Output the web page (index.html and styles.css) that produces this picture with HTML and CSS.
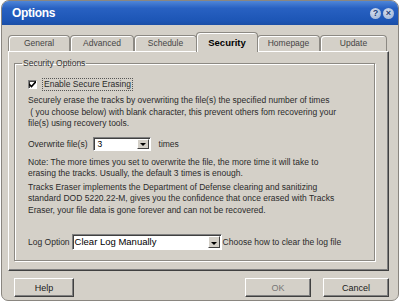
FILE: index.html
```html
<!DOCTYPE html>
<html lang="en">
<head>
    <meta charset="UTF-8">
    <title>Options</title>
    <link rel="stylesheet" href="styles.css">
</head>
<body>
    <div class="window">
        <div class="titlebar">
            <span class="title">Options</span>
            <div class="caption-btns">
                <span class="cap-btn">?</span>
                <span class="cap-btn">&#215;</span>
            </div>
        </div>

        <div class="client">
            <div class="tabs">
                <div class="tab">General</div>
                <div class="tab">Advanced</div>
                <div class="tab">Schedule</div>
                <div class="tab active">Security</div>
                <div class="tab">Homepage</div>
                <div class="tab">Update</div>
            </div>

            <div class="panel">
                <fieldset class="group">
                    <legend>Security Options</legend>

                    <label class="check">
                        <span class="check-box">
                            <svg width="7" height="7" viewBox="0 0 7 7"><path d="M0 3 L2.5 5.5 L7 0.5" fill="none" stroke="#000" stroke-width="1.6"/></svg>
                        </span>
                        <span class="focus">Enable Secure Erasing</span>
                    </label>

                    <p class="text">
                        Securely erase the tracks by overwriting the file(s) the specified number of times<br>
                        &nbsp;( you choose below) with blank character, this prevent others fom recovering your<br>
                        file(s) using recovery tools.
                    </p>

                    <div class="row">
                        <span>Overwrite file(s)</span>
                        <div class="combo combo-times">
                            <span class="combo-value">3</span>
                            <span class="combo-drop"><span class="arrow"></span></span>
                        </div>
                        <span class="after">times</span>
                    </div>

                    <p class="text note">
                        Note: The more times you set to overwrite the file, the more time it will take to<br>
                        erasing the tracks. Usually, the default 3 times is enough.
                    </p>

                    <p class="text dod">
                        Tracks Eraser implements the Department of Defense clearing and sanitizing<br>
                        standard DOD 5220.22-M, gives you the confidence that once erased with Tracks<br>
                        Eraser, your file data is gone forever and can not be recovered.
                    </p>

                    <div class="row log-row">
                        <span>Log Option</span>
                        <div class="combo combo-log">
                            <span class="combo-value">Clear Log Manually</span>
                            <span class="combo-drop"><span class="arrow"></span></span>
                        </div>
                        <span>Choose how to clear the log file</span>
                    </div>
                </fieldset>
            </div>

            <div class="buttons">
                <button class="btn btn-help">Help</button>
                <div class="spacer"></div>
                <button class="btn btn-ok">OK</button>
                <button class="btn btn-cancel">Cancel</button>
            </div>
        </div>
    </div>
</body>
</html>
```

FILE: styles.css
```css
body {
    margin: 0;
    background-color: #fff;
    font-family: 'Liberation Sans', Arial, sans-serif;
    font-size: 8.5px;
    color: #2a2a2a;
}
.window {
    width: 396px;
    height: 299px;
    margin-left: 1px;
    background-color: #d4d0c8;
    border: 1px solid #8a8680;
    border-radius: 8px 8px 7px 7px;
    overflow: hidden;
}
.titlebar {
    height: 24px;
    display: flex;
    align-items: center;
    justify-content: space-between;
    padding: 0 4px 0 10px;
    background: linear-gradient(#4f86d8, #2861c2 30%, #1d56b6 80%, #1a4ea6);
}
.title {
    color: #fff;
    font-size: 12px;
    font-weight: bold;
    letter-spacing: -0.3px;
}
.caption-btns {
    display: flex;
    gap: 2px;
}
.cap-btn {
    width: 11px;
    height: 11px;
    border-radius: 50%;
    background: radial-gradient(circle at 40% 35%, #d8e2f2, #94aacf);
    color: #1f3f78;
    font-size: 9px;
    font-weight: bold;
    line-height: 11px;
    text-align: center;
}
.client {
    padding: 7px 0 0 6px;
}
.tabs {
    display: flex;
    align-items: flex-end;
    height: 19px;
}
.tab {
    height: 16px;
    line-height: 15px;
    text-align: center;
    color: #454545;
    background-color: #d4d0c8;
    border: 1px solid #8c8983;
    border-bottom: none;
    border-radius: 4px 4px 0 0;
    box-shadow: inset 1px 1px 0 #fff;
    box-sizing: border-box;
}
.tab:nth-child(1) { width: 62px; }
.tab:nth-child(2) { width: 64px; }
.tab:nth-child(3) { width: 63px; }
.tab:nth-child(4) { width: 62px; }
.tab:nth-child(5) { width: 63px; }
.tab:nth-child(6) { width: 67px; }
.tab.active {
    height: 20px;
    line-height: 19px;
    color: #000;
    font-weight: bold;
    font-size: 9.5px;
    margin: 0 -1px -1px;
    position: relative;
    z-index: 1;
}
.panel {
    width: 381px;
    height: 220px;
    box-sizing: border-box;
    border-top: 1px solid #fff;
    border-left: 1px solid #fff;
    border-right: 1px solid #404040;
    border-bottom: 1px solid #404040;
    box-shadow: inset -1px -1px 0 #808080;
    padding: 6px 13px 0 5px;
}
.group {
    margin: 0;
    padding: 8px 0 0 13px;
    height: 203px;
    box-sizing: border-box;
    border: 1px solid #8c8983;
    box-shadow: inset 1px 1px 0 #fff, 1px 1px 0 #fff;
}
.group legend {
    padding: 0 1px;
    margin-left: -6px;
    color: #333;
    line-height: 11px;
}
.check {
    display: flex;
    align-items: center;
    height: 12px;
    margin-top: 1px;
}
.check-box {
    width: 9px;
    height: 9px;
    box-sizing: border-box;
    background-color: #fff;
    border-top: 1px solid #808080;
    border-left: 1px solid #808080;
    border-right: 1px solid #fff;
    border-bottom: 1px solid #fff;
    box-shadow: inset 1px 1px 0 #404040;
    display: flex;
    align-items: center;
    justify-content: center;
}
.focus {
    margin-left: 5px;
    padding: 0 1px;
    line-height: 11px;
    border: 1px dotted #555;
}
.text {
    margin: 5px 0 0;
    line-height: 11.5px;
    white-space: nowrap;
}
.row {
    display: flex;
    align-items: center;
    height: 14px;
    margin-top: 7px;
}
.combo {
    display: flex;
    height: 14px;
    box-sizing: border-box;
    background-color: #fff;
    border-top: 1px solid #808080;
    border-left: 1px solid #808080;
    border-right: 1px solid #fff;
    border-bottom: 1px solid #fff;
    box-shadow: inset 1px 1px 0 #404040;
}
.combo-value {
    flex: 1;
    padding-left: 4px;
    line-height: 12px;
    color: #000;
}
.combo-drop {
    width: 12px;
    margin: 1px 1px 1px 0;
    background-color: #d4d0c8;
    box-sizing: border-box;
    border-top: 1px solid #fff;
    border-left: 1px solid #fff;
    border-right: 1px solid #404040;
    border-bottom: 1px solid #404040;
    display: flex;
    align-items: center;
    justify-content: center;
}
.arrow {
    width: 0;
    height: 0;
    border-left: 3px solid transparent;
    border-right: 3px solid transparent;
    border-top: 3px solid #000;
    margin-top: 2px;
}
.combo-times {
    width: 58px;
    margin-left: 5px;
}
.after {
    margin-left: 8px;
}
.note {
    margin-top: 6px;
}
.dod {
    margin-top: 2px;
}
.log-row {
    height: 16px;
    margin-top: 18px;
}
.combo-log {
    width: 150px;
    height: 16px;
    margin: 0 1px 0 2px;
}
.combo-log .combo-value {
    font-size: 9.5px;
    line-height: 14px;
    padding-left: 2px;
}
.buttons {
    display: flex;
    padding: 7px 0 0 6px;
    width: 375px;
}
.spacer {
    flex: 1;
}
.btn {
    height: 19px;
    font-family: inherit;
    font-size: 9px;
    color: #1a1a1a;
    background-color: #d4d0c8;
    border-top: 1px solid #fff;
    border-left: 1px solid #fff;
    border-right: 1px solid #404040;
    border-bottom: 1px solid #404040;
    box-shadow: inset -1px -1px 0 #808080;
    padding: 0;
}
.btn-help {
    width: 60px;
}
.btn-ok {
    width: 66px;
    color: #777;
}
.btn-cancel {
    width: 66px;
    margin-left: 12px;
}
```
